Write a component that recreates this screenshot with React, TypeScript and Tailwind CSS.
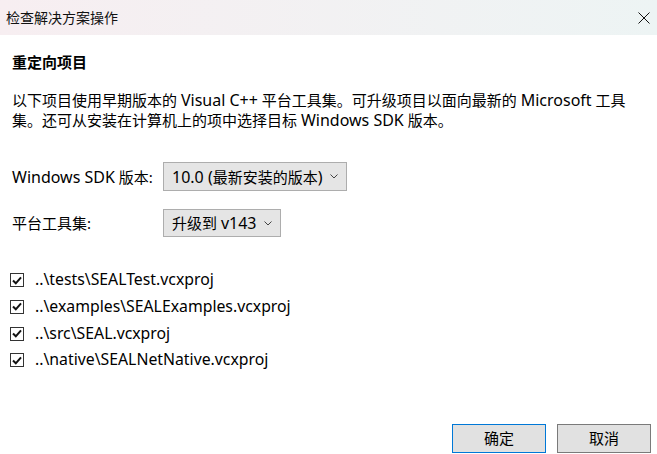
import React from "react";

const font = { fontFamily: '"Segoe UI", "Noto Sans", "Noto Sans CJK SC", sans-serif' };

function L({ children }: { children: React.ReactNode }) {
  return <span className="text-[16px]">{children}</span>;
}

function Chevron() {
  return (
    <svg width="8" height="5" viewBox="0 0 8 5" className="shrink-0">
      <path d="M0.5 0.5 L4 4 L7.5 0.5" fill="none" stroke="#444" strokeWidth="1" />
    </svg>
  );
}

function Check({ label }: { label: string }) {
  return (
    <div className="flex h-[26.67px] items-center">
      <div className="ml-[10px] flex h-[14px] w-[14px] items-center justify-center border border-[#333]">
        <svg width="10" height="9" viewBox="0 0 10 9">
          <path d="M1 4.5 L3.8 7.3 L9 1.3" fill="none" stroke="#111" strokeWidth="2" />
        </svg>
      </div>
      <span className="ml-[11px] text-[15.8px] text-black">{label}</span>
    </div>
  );
}

export default function App() {
  return (
    <div className="h-[454px] w-[657px] overflow-hidden bg-white text-black" style={font}>
      <div className="flex h-[35px] items-center justify-between bg-gradient-to-r from-[#f7eef1] to-[#edf4f4] pl-[6px] pr-[6px]">
        <span className="text-[14px] text-[#111]">检查解决方案操作</span>
        <svg width="12" height="12" viewBox="0 0 12 12" className="mr-[1px]">
          <path d="M0.5 0.5 L11.5 11.5 M11.5 0.5 L0.5 11.5" stroke="#111" strokeWidth="1" />
        </svg>
      </div>
      <div className="px-3">
        <div className="mt-[17px] text-[15px] font-bold leading-[20px]">重定向项目</div>
        <div className="mt-[18px] text-[15px] leading-[20px]">
          <div>
            以下项目使用早期版本的 <L>Visual C++</L> 平台工具集。可升级项目以面向最新的 <L>Microsoft</L> 工具
          </div>
          <div>
            集。还可从安装在计算机上的项中选择目标 <L>Windows SDK</L> 版本。
          </div>
        </div>
        <div className="mt-[32px] flex items-center">
          <span className="w-[151px] text-[15px]">
            <L>Windows SDK</L> 版本:
          </span>
          <div className="flex h-[29px] w-[184px] items-center justify-between border border-[#adadad] bg-[#e5e5e5] pl-[8px] pr-[8px] text-[15px]">
            <span>
              <L>10.0 (</L>最新安装的版本<L>)</L>
            </span>
            <Chevron />
          </div>
        </div>
        <div className="mt-[18px] flex items-center">
          <span className="w-[151px] text-[15px]">平台工具集:</span>
          <div className="flex h-[28px] w-[118px] items-center justify-between border border-[#adadad] bg-[#e5e5e5] pl-[8px] pr-[8px] text-[15px]">
            <span>
              升级到 <L>v143</L>
            </span>
            <Chevron />
          </div>
        </div>
      </div>
      <div className="mt-[30px]">
        <Check label="..\tests\SEALTest.vcxproj" />
        <Check label="..\examples\SEALExamples.vcxproj" />
        <Check label="..\src\SEAL.vcxproj" />
        <Check label="..\native\SEALNetNative.vcxproj" />
      </div>
      <div className="mt-[50px] flex justify-end gap-[11px] pr-[6px]">
        <div className="flex h-[29px] w-[94px] items-center justify-center border border-[#0078d7] bg-[#e1e1e1] text-[15px]">确定</div>
        <div className="flex h-[29px] w-[94px] items-center justify-center border border-[#7a7a7a] bg-[#e1e1e1] text-[15px]">取消</div>
      </div>
    </div>
  );
}
